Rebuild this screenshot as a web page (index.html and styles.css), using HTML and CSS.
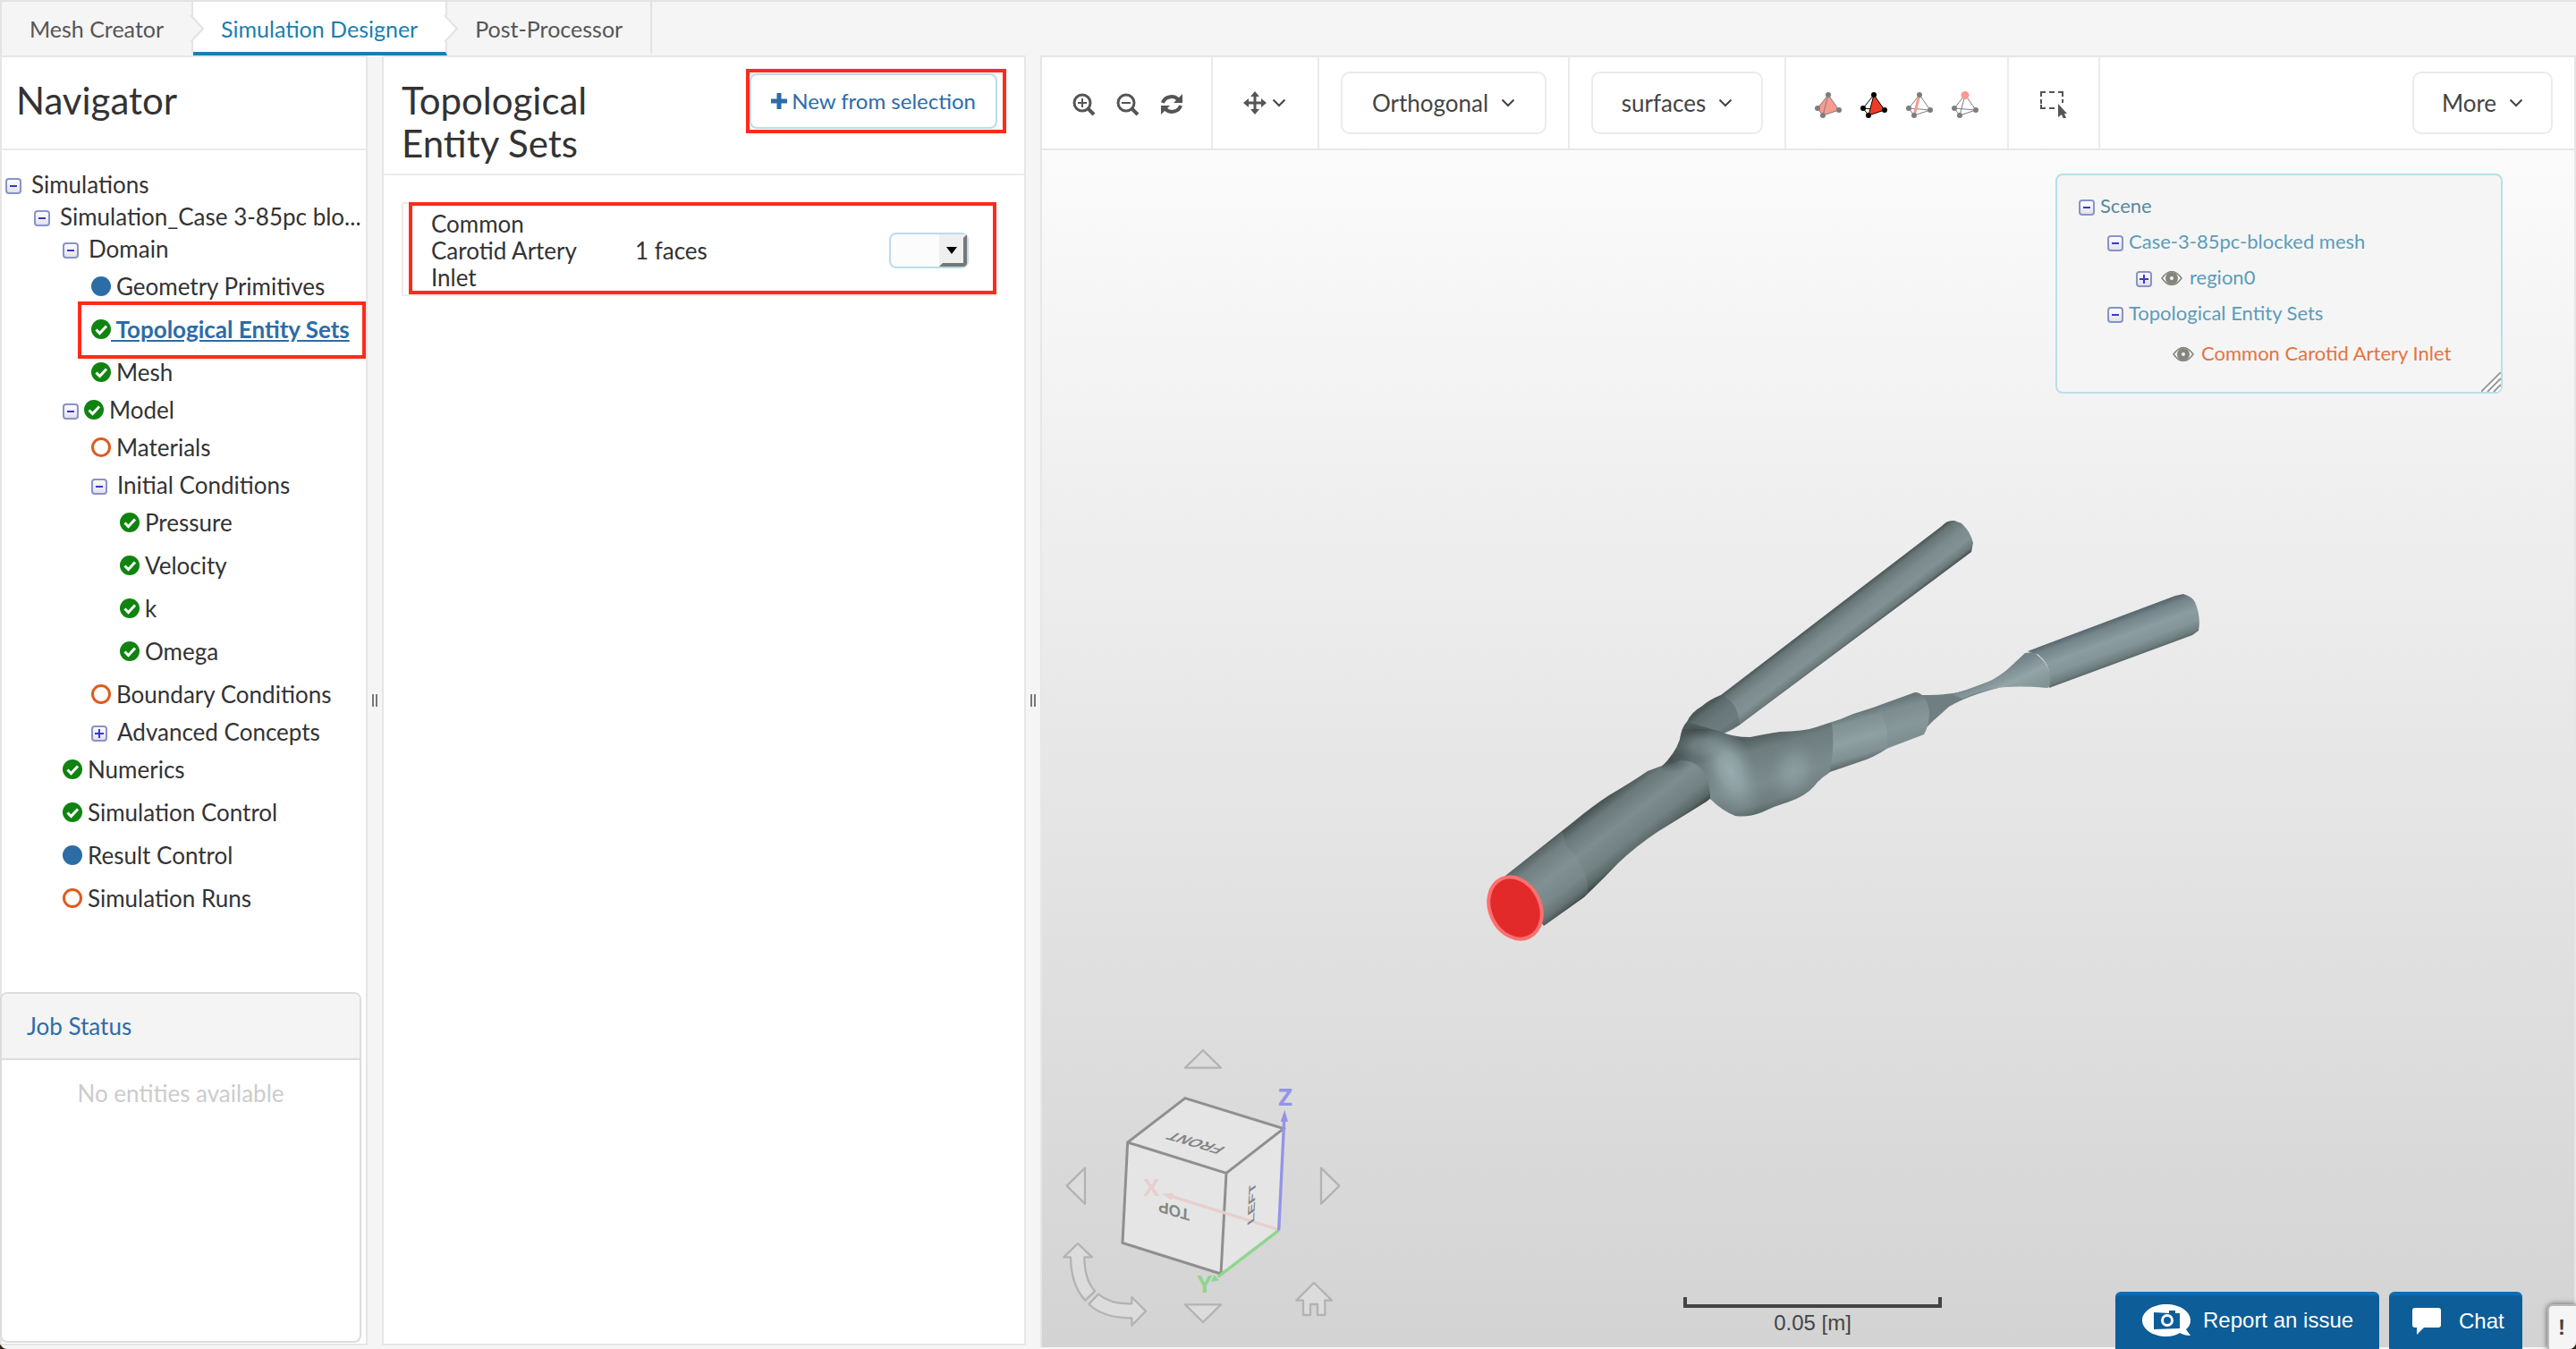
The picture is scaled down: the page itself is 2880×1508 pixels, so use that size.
FILE: index.html
```html
<!DOCTYPE html>
<html lang="en">
<head>
<meta charset="utf-8">
<title>Simulation Designer</title>
<link rel="stylesheet" href="styles.css">
</head>
<body>
<svg class="sprite" aria-hidden="true">
  <defs>
    <linearGradient id="tg" x1="0" y1="0" x2="0" y2="1"><stop offset="0" stop-color="#fff"/><stop offset="1" stop-color="#dfe0ea"/></linearGradient>
  </defs>
  <symbol id="minus" viewBox="0 0 18 18"><rect x="1" y="1" width="16" height="16" rx="3" fill="url(#tg)" stroke="#8893c8" stroke-width="2"/><path d="M5 9h8" stroke="#3a35d6" stroke-width="2"/></symbol>
  <symbol id="plus" viewBox="0 0 18 18"><rect x="1" y="1" width="16" height="16" rx="3" fill="url(#tg)" stroke="#8893c8" stroke-width="2"/><path d="M4 9h10M9 4v10" stroke="#3a35d6" stroke-width="2"/></symbol>
  <symbol id="ok" viewBox="0 0 22 22"><circle cx="11" cy="11" r="11" fill="#108310"/><path d="M5.500 11.500l4 4 7.500-8" fill="none" stroke="#fff" stroke-width="3"/></symbol>
  <symbol id="dot" viewBox="0 0 22 22"><circle cx="11" cy="11" r="11" fill="#2c6da5"/></symbol>
  <symbol id="ring" viewBox="0 0 22 22"><circle cx="11" cy="11" r="9.500" fill="none" stroke="#df5a1f" stroke-width="3"/></symbol>
  <symbol id="eye" viewBox="0 0 24 16"><path d="M1 8q11-15 22 0q-11 15-22 0z" fill="none" stroke="#85857d" stroke-width="1.500"/><circle cx="12" cy="8" r="4.500" fill="none" stroke="#85857d" stroke-width="5"/></symbol>
  <symbol id="chev" viewBox="0 0 16 10"><path d="M1.500 1.500L8 8l6.500-6.500" fill="none" stroke="#444" stroke-width="2"/></symbol>
  <symbol id="tabarrow" viewBox="0 0 16 32"><path d="M0 0h2L15 16 2 32H0z" fill="currentColor"/><path d="M1 1L15 16 1 31" fill="none" stroke="#e3e3e3" stroke-width="2"/></symbol>
</svg>

<div class="app">
  <nav class="tabs">
    <a class="tab" href="#mesh">Mesh Creator<svg class="tab-arrow"><use href="#tabarrow"/></svg></a>
    <a class="tab active" href="#designer">Simulation Designer<svg class="tab-arrow"><use href="#tabarrow"/></svg></a>
    <a class="tab" href="#post">Post-Processor</a>
  </nav>

  <main class="workspace">
    <aside class="panel navigator">
      <header class="panel-head"><h1>Navigator</h1></header>
      <ul class="tree">
        <li><div class="row"><svg class="tog"><use href="#minus"/></svg><span>Simulations</span></div>
          <ul>
            <li><div class="row"><svg class="tog"><use href="#minus"/></svg><span>Simulation_Case 3-85pc blo...</span></div>
              <ul>
                <li><div class="row"><svg class="tog"><use href="#minus"/></svg><span>Domain</span></div>
                  <ul>
                    <li class="row leaf"><svg class="st"><use href="#dot"/></svg><span>Geometry Primitives</span></li>
                    <li class="row leaf marked"><svg class="st"><use href="#ok"/></svg><a href="#sets">&nbsp;Topological Entity Sets</a></li>
                    <li class="row leaf"><svg class="st"><use href="#ok"/></svg><span>Mesh</span></li>
                  </ul>
                </li>
                <li><div class="row status"><svg class="tog"><use href="#minus"/></svg><svg class="st"><use href="#ok"/></svg><span>Model</span></div>
                  <ul>
                    <li class="row leaf"><svg class="st"><use href="#ring"/></svg><span>Materials</span></li>
                    <li><div class="row"><svg class="tog"><use href="#minus"/></svg><span>Initial Conditions</span></div>
                      <ul>
                        <li class="row leaf"><svg class="st"><use href="#ok"/></svg><span>Pressure</span></li>
                        <li class="row leaf"><svg class="st"><use href="#ok"/></svg><span>Velocity</span></li>
                        <li class="row leaf"><svg class="st"><use href="#ok"/></svg><span>k</span></li>
                        <li class="row leaf"><svg class="st"><use href="#ok"/></svg><span>Omega</span></li>
                      </ul>
                    </li>
                    <li class="row leaf"><svg class="st"><use href="#ring"/></svg><span>Boundary Conditions</span></li>
                    <li><div class="row"><svg class="tog"><use href="#plus"/></svg><span>Advanced Concepts</span></div></li>
                  </ul>
                </li>
                <li class="row leaf"><svg class="st"><use href="#ok"/></svg><span>Numerics</span></li>
                <li class="row leaf"><svg class="st"><use href="#ok"/></svg><span>Simulation Control</span></li>
                <li class="row leaf"><svg class="st"><use href="#dot"/></svg><span>Result Control</span></li>
                <li class="row leaf"><svg class="st"><use href="#ring"/></svg><span>Simulation Runs</span></li>
              </ul>
            </li>
          </ul>
        </li>
      </ul>
      <section class="jobs">
        <h2><a href="#jobs">Job Status</a></h2>
        <p>No entities available</p>
      </section>
    </aside>

    <div class="splitter"><i></i><i></i></div>

    <section class="panel sets">
      <header class="panel-head">
        <h1>Topological Entity Sets</h1>
        <div class="mark"><button class="new" type="button"><svg class="add" viewBox="0 0 18 18"><path d="M9 0v18M0 9h18" stroke="#2c6ca8" stroke-width="5"/></svg>New from selection</button></div>
      </header>
      <div class="set-list">
        <table>
          <tr>
            <td class="name">Common Carotid Artery Inlet</td>
            <td>1 faces</td>
            <td class="act"><div class="pick"><select aria-label="Set action"><option></option></select><svg class="pick-btn" viewBox="0 0 31 36"><path d="M0 0h31v36H0z" fill="#efefef"/><path d="M27 4l4-4v32q0 4-4 4H0l4-4h23z" fill="#777"/><path d="M8 14h12l-6 8z" fill="#000"/></svg></div></td>
          </tr>
        </table>
      </div>
    </section>

    <div class="splitter"><i></i><i></i></div>

    <section class="viewer">
      <div class="toolbar">
        <div class="group zooms">
          <button type="button" aria-label="Zoom in"><svg viewBox="0 0 26 26"><circle cx="11" cy="11" r="9" fill="none" stroke="#555" stroke-width="3"/><path d="M6 11h10M11 6v10" stroke="#555" stroke-width="2"/><path d="M17 17l7 7" stroke="#555" stroke-width="4"/></svg></button>
          <button type="button" aria-label="Zoom out"><svg viewBox="0 0 26 26"><circle cx="11" cy="11" r="9" fill="none" stroke="#555" stroke-width="3"/><path d="M6 11h10" stroke="#555" stroke-width="2"/><path d="M17 17l7 7" stroke="#555" stroke-width="4"/></svg></button>
          <button type="button" aria-label="Refresh"><svg viewBox="0 0 26 26"><path d="M3 11A10 9 0 0 1 20 7M23 14A10 9 0 0 1 6 18" fill="none" stroke="#555" stroke-width="4"/><path d="M25 1v10H15zM1 24V14h10z" fill="#555"/></svg></button>
        </div>
        <div class="group pan">
          <button type="button" aria-label="Pan"><svg viewBox="0 0 26 26"><path d="M13 3v20M3 13h20" stroke="#555" stroke-width="3"/><path d="M13 0l5 6H8zM13 26l5-6H8zM0 13l6-5v10zM26 13l-6-5v10z" fill="#555"/></svg><svg class="chev"><use href="#chev"/></svg></button>
        </div>
        <div class="group boxed"><button class="drop ortho" type="button">Orthogonal<svg class="chev"><use href="#chev"/></svg></button></div>
        <div class="group boxed"><button class="drop surf" type="button">surfaces<svg class="chev"><use href="#chev"/></svg></button></div>
        <div class="group tetras">
          <button type="button" aria-label="Select volumes"><svg viewBox="0 0 30 30"><path d="M15 4L3 19l6 8 18-6z" fill="#f99b90" stroke="#7d7d7d"/><path d="M15 4L9 27" stroke="#7d7d7d"/><g fill="#7d7d7d"><circle cx="15" cy="4" r="3"/><circle cx="3" cy="19" r="3"/><circle cx="9" cy="27" r="3"/><circle cx="27" cy="21" r="3"/></g></svg></button>
          <button type="button" aria-label="Select faces"><svg viewBox="0 0 30 30"><path d="M15 4L3 19l6 8M3 19l24 2" fill="none" stroke="#000"/><path d="M15 4L9 27l18-6z" fill="#f03a24" stroke="#000"/><circle cx="15" cy="4" r="3"/><circle cx="3" cy="19" r="3"/><circle cx="9" cy="27" r="3"/><circle cx="27" cy="21" r="3"/></svg></button>
          <button type="button" aria-label="Select edges"><svg viewBox="0 0 30 30"><path d="M15 4L3 19l6 8 18-6zM3 19l24 2" fill="none" stroke="#7d7d7d"/><path d="M15 4L9 27" stroke="#f99b90" stroke-width="3"/><g fill="#7d7d7d"><circle cx="15" cy="4" r="3"/><circle cx="3" cy="19" r="3"/><circle cx="9" cy="27" r="3"/><circle cx="27" cy="21" r="3"/></g></svg></button>
          <button type="button" aria-label="Select nodes"><svg viewBox="0 0 30 30"><path d="M15 4L3 19l6 8 18-6zM3 19l24 2M15 4L9 27" fill="none" stroke="#7d7d7d"/><g fill="#7d7d7d"><circle cx="3" cy="19" r="3"/><circle cx="9" cy="27" r="3"/><circle cx="27" cy="21" r="3"/></g><circle cx="15" cy="4.500" r="4.500" fill="#f99b90"/></svg></button>
        </div>
        <div class="group marquee">
          <button type="button" aria-label="Box select"><svg viewBox="0 0 30 30"><path d="M1 6V1h5M10 1h6M20 1h5v5M1 9v5M1 15v4h5M10 19h6M25 9v4" fill="none" stroke="#555" stroke-width="2"/><path d="M20 14v15l4-3 2 5 3-1-2-5h3z" fill="#555"/></svg></button>
        </div>
        <button class="drop more" type="button">More<svg class="chev"><use href="#chev"/></svg></button>
      </div>

      <div class="canvas">
        <svg class="vessel" viewBox="0 0 860 520" role="img" aria-label="Carotid artery mesh">
          <defs>
            <linearGradient id="gUp" gradientUnits="userSpaceOnUse" x1="532" y1="28" x2="558" y2="62"><stop offset="0" stop-color="#4b5757"/><stop offset=".12" stop-color="#677576"/><stop offset=".4" stop-color="#7b8b8e"/><stop offset=".7" stop-color="#819194"/><stop offset=".9" stop-color="#6b797a"/><stop offset="1" stop-color="#465151"/></linearGradient>
            <linearGradient id="gTr" gradientUnits="userSpaceOnUse" x1="44" y1="419" x2="87" y2="475"><stop offset="0" stop-color="#4a5656"/><stop offset=".15" stop-color="#6a7879"/><stop offset=".45" stop-color="#7d8d90"/><stop offset=".75" stop-color="#728182"/><stop offset=".92" stop-color="#5b6868"/><stop offset="1" stop-color="#3f4a4a"/></linearGradient>
            <linearGradient id="gBu" gradientUnits="userSpaceOnUse" x1="340" y1="256" x2="364" y2="342"><stop offset="0" stop-color="#4f5c5c"/><stop offset=".2" stop-color="#6e7d7e"/><stop offset=".6" stop-color="#7b8b8d"/><stop offset=".85" stop-color="#6f7e80"/><stop offset="1" stop-color="#566363"/></linearGradient>
            <linearGradient id="gMi" gradientUnits="userSpaceOnUse" x1="450" y1="229" x2="466" y2="286"><stop offset="0" stop-color="#5b696a"/><stop offset=".2" stop-color="#809093"/><stop offset=".55" stop-color="#8fa1a4"/><stop offset=".85" stop-color="#7f8f92"/><stop offset="1" stop-color="#5d6a6b"/></linearGradient>
            <linearGradient id="gEn" gradientUnits="userSpaceOnUse" x1="625" y1="168" x2="642" y2="214"><stop offset="0" stop-color="#56646a"/><stop offset=".15" stop-color="#74848a"/><stop offset=".45" stop-color="#8b9da0"/><stop offset=".7" stop-color="#84959a"/><stop offset=".9" stop-color="#6d7c7e"/><stop offset="1" stop-color="#526060"/></linearGradient>
            <linearGradient id="gCo" gradientUnits="userSpaceOnUse" x1="618" y1="178" x2="634" y2="212"><stop offset="0" stop-color="#74838a"/><stop offset=".5" stop-color="#93a5a8"/><stop offset="1" stop-color="#829295"/></linearGradient>
            <radialGradient id="hi"><stop offset="0" stop-color="#98abae"/><stop offset=".4" stop-color="#90a2a5" stop-opacity=".9"/><stop offset="1" stop-color="#7f8f92" stop-opacity="0"/></radialGradient>
            <radialGradient id="lo"><stop offset="0" stop-color="#3f4a4a" stop-opacity=".8"/><stop offset="1" stop-color="#4f5c5c" stop-opacity="0"/></radialGradient>
            <clipPath id="cb"><path d="M219 297Q234 282 239 267 241 255 247 247L285 258Q298 264 318 264 332 261 351 258 381 258 402 250L416 246 416 300 406 304Q396 310 390 318 380 330 359 337 345 341 331 348 315 354 301 352 286 346 274 334L262 333 219 300z"/></clipPath>
          </defs>
          <path d="M219 297Q234 282 239 267 241 252 247 247 252 236 263 230 272 222 285 217L532 28Q538 21 546 22L554 25Q564 34 567 47L565 57 313 245Q300 256 285 261L270 300z" fill="url(#gUp)"/>
          <path d="M285 217Q304 224 306 250L285 261 239 267 247 247Q252 236 263 230z" fill="#4f5c5c" fill-opacity=".4"/>
          <path d="M44 419L121 358Q140 342 160 329 184 315 203 302L219 296 262 262 300 310 269 336Q240 354 214 370 190 386 170 405 152 424 132 443L87 475z" fill="url(#gTr)"/>
          <path d="M112 385Q138 410 136 438L87 475 44 419 108 370z" fill="#8fa1a4" fill-opacity=".2"/>
          <path d="M502 214L510 217Q545 217 560 211L587 201 595 209Q560 218 540 230L521 247 512 256z" fill="#6f7e80"/>
          <path d="M560 211Q578 206 590 199 602 192 610 184L625 170 634 169Q655 182 655 206L650 209Q615 206 595 209 572 213 555 221L543 216z" fill="url(#gCo)"/>
          <path d="M628 168L793 106 802 104Q812 107 815 113 822 130 819 145L812 150 652 209Q657 186 640 172z" fill="url(#gEn)"/>
          <path d="M385 255L406 248Q420 244 433 238L455 231 502 214Q512 214 517 230 520 246 512 261L472 276Q456 287 439 292L404 304 390 310z" fill="url(#gMi)"/>
          <path d="M460 229Q474 250 471 277L512 261Q520 246 517 230 512 214 502 214z" fill="#778789" fill-opacity=".35"/>
          <g clip-path="url(#cb)">
            <path d="M262 255L408 245Q414 272 405 310V360H272Q280 290 240 290L215 300V255z" fill="url(#gBu)"/>
            <ellipse cx="255" cy="255" rx="55" ry="16" fill="url(#lo)"/>
            <ellipse cx="228" cy="290" rx="24" ry="14" fill="url(#lo)"/>
            <ellipse cx="296" cy="302" rx="29" ry="56" transform="rotate(-22 296 302)" fill="url(#hi)"/>
            <ellipse cx="265" cy="274" rx="30" ry="18" fill="url(#hi)" fill-opacity=".5"/>
            <ellipse cx="366" cy="302" rx="28" ry="36" transform="rotate(20 366 302)" fill="url(#hi)" fill-opacity=".6"/>
          </g>
          <ellipse cx="55" cy="455" rx="28" ry="36" transform="rotate(-26 55 455)" fill="#e22a2a" stroke="#ff6f6f" stroke-width="4"/>
        </svg>

        <div class="scene">
          <div class="srow"><svg class="tog"><use href="#minus"/></svg><span class="root">Scene</span></div>
          <div class="srow l1"><svg class="tog"><use href="#minus"/></svg><span>Case-3-85pc-blocked mesh</span></div>
          <div class="srow l2"><svg class="tog"><use href="#plus"/></svg><svg class="eye"><use href="#eye"/></svg><span>region0</span></div>
          <div class="srow l1"><svg class="tog"><use href="#minus"/></svg><span>Topological Entity Sets</span></div>
          <div class="srow l3"><svg class="eye"><use href="#eye"/></svg><span class="hot">Common Carotid Artery Inlet</span></div>
          <svg class="grip" viewBox="0 0 22 22"><path d="M0 22L22 0M7 22L22 7M14 22l8-8" stroke="#999" stroke-width="2"/><path d="M3 22L22 3M10 22l12-12M17 22l5-5" stroke="#fff" stroke-width="2"/></svg>
        </div>

        <svg class="cube" viewBox="0 0 1080 1074" role="img" aria-label="View cube">
          <g fill="#dcdcdc" stroke="#b3b3b3" stroke-width="7" stroke-linejoin="round">
            <path d="M525 72L585 131H465z"/><path d="M525 984L585 925H465z"/><path d="M68 527L129 467V587z"/><path d="M982 527L921 467V587z"/>
            <path d="M105 720L153 766H127Q127 840 162 880L130 911Q82 860 81 766H58z"/>
            <path d="M174 890Q215 925 286 922V900L333 947 286 995V970Q190 970 142 924z"/>
            <path d="M897 852L957 911H934V960H909V924H885V960H861V911H838z"/>
          </g>
          <path d="M465 233L795 335 779 676 585 822 255 718 272 381z" fill="#e5e5e5"/>
          <path d="M585 822L255 718 272 381 465 233 795 335 603 484 272 381M603 484L585 822" fill="none" stroke="#8f8f8f" stroke-width="9"/>
          <path d="M779 674L420 562" stroke="#e8cfcf" stroke-width="10"/><path d="M388 553l38-2-8 24z" fill="#e8cfcf"/>
          <g class="face">
            <text transform="matrix(-.95 -.28 .05 -1 429 592)">TOP</text>
            <text transform="matrix(-.95 -.28 .8 -.6 515 372)">FRONT</text>
            <text transform="matrix(.05 -1 .6 -.4 699 580)">LEFT</text>
          </g>
          <path d="M779 676L575 832" stroke="#8fd68f" stroke-width="10"/><path d="M551 849l12-24 15 19z" fill="#8fd68f"/>
          <path d="M779 676L797 310" stroke="#9494e8" stroke-width="10"/><path d="M799 272l11 40h-25z" fill="#9494e8"/>
          <g class="axis"><text x="801" y="258" fill="#9494e8">Z</text><text x="352" y="560" fill="#e8cfcf">X</text><text x="530" y="885" fill="#8fd68f">Y</text></g>
        </svg>

        <div class="scale"><div class="bar"></div>0.05 [m]</div>
      </div>
    </section>
  </main>

  <div class="dock">
    <button class="dock-btn report" type="button"><svg viewBox="0 0 54 36"><path d="M27 0C42 0 54 8 54 18q0 6-5 10l5 7q-7 0-12-3-6 4-15 4C12 36 0 28 0 18S12 0 27 0z" fill="#fff"/><path d="M13 9l17 1V7h7v3h5v17l-29 1z" fill="#0d5d98"/><circle cx="28" cy="18" r="5.500" fill="none" stroke="#fff" stroke-width="3"/></svg>Report an issue</button>
    <button class="dock-btn chat" type="button"><svg viewBox="0 0 32 30"><path d="M3 0h26q3 0 3 3v16q0 3-3 3H13l-8 8v-8H3q-3 0-3-3V3q0-3 3-3z" fill="#fff"/></svg>Chat</button>
    <button class="alert" type="button">!</button>
  </div>
</div>
</body>
</html>
```
FILE: styles.css
```css
* { box-sizing: border-box; }
html { background: #2b2418; }
body { margin: 0; font: 26px/30px Lato, "Open Sans", sans-serif; color: #333; }
button, select { font: inherit; color: inherit; cursor: pointer; }
a { color: inherit; text-decoration: none; }
ul { list-style: none; margin: 0; padding: 0; }
svg { display: block; flex: none; }
.sprite { position: absolute; width: 0; height: 0; }

.app { position: relative; display: flex; flex-direction: column; min-height: 100vh; background: #f5f5f5; border-radius: 0 0 8px 8px; overflow: hidden; }

.tabs { display: flex; height: 62px; border: solid #e3e3e3; border-width: 2px 0 0 2px; font-size: 25px; }
.tab { position: relative; display: flex; align-items: center; padding: 4px 31px 0; border-right: 2px solid #e3e3e3; border-bottom: 4px solid transparent; color: #555; }
.tab.active { background: #fff; border-bottom-color: #1a7fb0; background-clip: padding-box; color: #1a7fb0; z-index: 0; }
.tab-arrow { position: absolute; right: -14px; top: 14px; width: 16px; height: 32px; color: #f5f5f5; z-index: 1; }
.tab.active .tab-arrow { color: #fff; }

.workspace { flex: 1; display: grid; grid-template-columns: 411px 16px 720px 16px minmax(0, 1fr); }
.panel { display: flex; flex-direction: column; background: #fff; border: 2px solid #e6e6e6; margin-bottom: 4px; }
.panel-head { display: flex; justify-content: space-between; align-items: flex-start; border-bottom: 2px solid #ebebeb; }
h1 { margin: 0; font-weight: 400; font-size: 42px; line-height: 48px; }
.navigator .panel-head { padding: 24px 16px 30px; }
.sets .panel-head { padding: 13px 20px 10px; }
.sets h1 { width: 280px; padding-top: 11px; }

.tree { padding: 20px 0 0 4px; }
.tree ul { padding-left: 32px; }
.row { display: flex; align-items: center; height: 36px; gap: 11px; white-space: nowrap; }
.row.status { gap: 6px; }
.row.leaf { position: relative; height: 48px; gap: 6px; }
.row.leaf.marked { gap: 0; }
.tog { width: 18px; height: 18px; margin-top: 4px; }
.st { width: 22px; height: 22px; }
.marked a { font-weight: 700; color: #2c6ca8; text-decoration: underline; }
.marked::after { content: ""; position: absolute; inset: -7px 0 -9px -15px; border: 4px solid #ff2a1b; }

.jobs { margin: auto 5px 1px -2px; height: 392px; border: 2px solid #dcdcdc; border-radius: 8px; }
.jobs h2 { margin: 0; padding: 20px 28px; font-size: 26px; line-height: 32px; font-weight: 400; color: #2c6ca8; background: #f4f4f4; border-bottom: 2px solid #dcdcdc; border-radius: 6px 6px 0 0; }
.jobs p { margin: 0; padding: 22px 0; text-align: center; color: #ccc; }

.splitter { display: flex; align-items: center; justify-content: center; gap: 2px; padding-bottom: 4px; }
.splitter i { width: 2px; height: 14px; background: #777; }

.mark { border: 4px solid #ff2a1b; padding: 1px 6px 1px 0; }
.new { display: flex; align-items: center; gap: 5px; height: 62px; padding: 0 22px; font-size: 24px; color: #2c6ca8; background: #fff; border: 2px solid #b9dcea; border-radius: 8px; white-space: nowrap; }
.add { width: 18px; height: 18px; }

.set-list { position: relative; margin: 30px 31px 0 20px; border: 2px solid #ebebeb; }
.set-list::after { content: ""; position: absolute; inset: -2px -2px 0 6px; border: 4px solid #ff2a1b; pointer-events: none; }
table { width: 100%; border-collapse: collapse; }
td { padding: 7px 0 4px; }
.name { width: 259px; padding-left: 31px; padding-right: 50px; }
.act { width: 118px; }
.pick { position: relative; width: 89px; height: 40px; }
.pick select { appearance: none; width: 100%; height: 100%; background: #fcfcfc; border: 2px solid #b9dcea; border-radius: 8px; }
.pick-btn { position: absolute; right: 2px; top: 2px; width: 31px; height: 36px; pointer-events: none; }

.viewer { display: flex; flex-direction: column; border: solid #e6e6e6; border-width: 2px 2px 0; margin-bottom: 2px; }
.toolbar { display: flex; align-items: center; height: 104px; background: #fff; border-bottom: 2px solid #e8e8e8; color: #444; }
.group { display: flex; align-items: center; height: 100%; border-right: 2px solid #ebebeb; }
.group > button:not(.drop) { display: flex; align-items: center; padding: 0; border: 0; background: none; }
.zooms { gap: 23px; padding: 4px 31px 0 34px; }
.zooms svg, .pan svg { width: 26px; height: 26px; }
.pan { padding: 0 35px 0 34px; }
.pan .chev, .chev { width: 16px; height: 10px; }
.pan button { gap: 6px; }
.boxed { padding: 0 24px; }
.drop { display: flex; align-items: center; justify-content: center; gap: 14px; height: 70px; border: 2px solid #ebebeb; border-radius: 10px; background: #fff; white-space: nowrap; }
.ortho { width: 230px; }
.surf { width: 192px; }
.more { width: 157px; margin: 0 24px 0 auto; }
.tetras { gap: 21px; padding: 4px 32px 0; }
.tetras svg { width: 30px; height: 30px; }
.marquee { padding: 4px 35px 0; }
.marquee svg { width: 30px; height: 30px; }

.canvas { position: relative; flex: 1; min-height: 1338px; background: linear-gradient(#fbfbfb, #d3d3d3); }
.vessel { position: absolute; left: 474px; top: 392px; width: 860px; height: 520px; }
.scene { position: absolute; right: 80px; top: 26px; width: 500px; height: 246px; padding: 16px 24px; border: 2px solid #b9deea; border-radius: 8px; background: #f5f5f5; font-size: 22px; color: #5b9cba; }
.srow { display: flex; align-items: center; gap: 6px; height: 40px; padding-bottom: 4px; white-space: nowrap; }
.srow .root { color: #5589a0; }
.l1 { padding-left: 32px; }
.l2 { padding-left: 64px; }
.l3 { padding-left: 105px; height: 50px; }
.eye { width: 24px; height: 16px; margin: 2px 2px 0 4px; }
.l3 .eye { margin-left: 0; }
.hot { color: #e57340; }
.grip { position: absolute; right: 0; bottom: 0; width: 22px; height: 22px; }
.cube { position: absolute; left: 5px; bottom: -2px; width: 360px; height: 358px; }
.face { font: 700 54px "Liberation Sans", Arial, sans-serif; fill: #858585; text-anchor: middle; }
.axis { font: 700 81px "Open Sans", sans-serif; text-anchor: middle; }
.scale { position: absolute; left: 717px; bottom: 10px; width: 289px; text-align: center; font: 24px/34px "Liberation Sans", Arial, sans-serif; color: #444; }
.bar { height: 12px; border: solid #444; border-width: 0 4px 4px; }

.dock { position: absolute; right: 0; bottom: 0; display: flex; align-items: flex-end; font: 24px/28px "Liberation Sans", Arial, sans-serif; }
.dock-btn { display: flex; align-items: center; height: 64px; margin-right: 11px; border: 0; border-top: 4px solid #0e6db5; border-radius: 6px 6px 0 0; background: #0d5d98; color: #fff; white-space: nowrap; }
.report { gap: 14px; width: 295px; padding: 0 0 4px 30px; }
.report svg { width: 54px; height: 36px; }
.chat { gap: 20px; width: 149px; margin-right: 28px; padding: 0 0 2px 26px; }
.chat svg { width: 32px; height: 30px; }
.alert { width: 32px; height: 50px; padding: 0 2px 0 0; border: 2px solid #bbb; border-width: 2px 0 0 2px; border-radius: 6px 0 0; background: #f5f5f5; box-shadow: 0 0 6px #555; font-weight: 700; color: #444; }
```
